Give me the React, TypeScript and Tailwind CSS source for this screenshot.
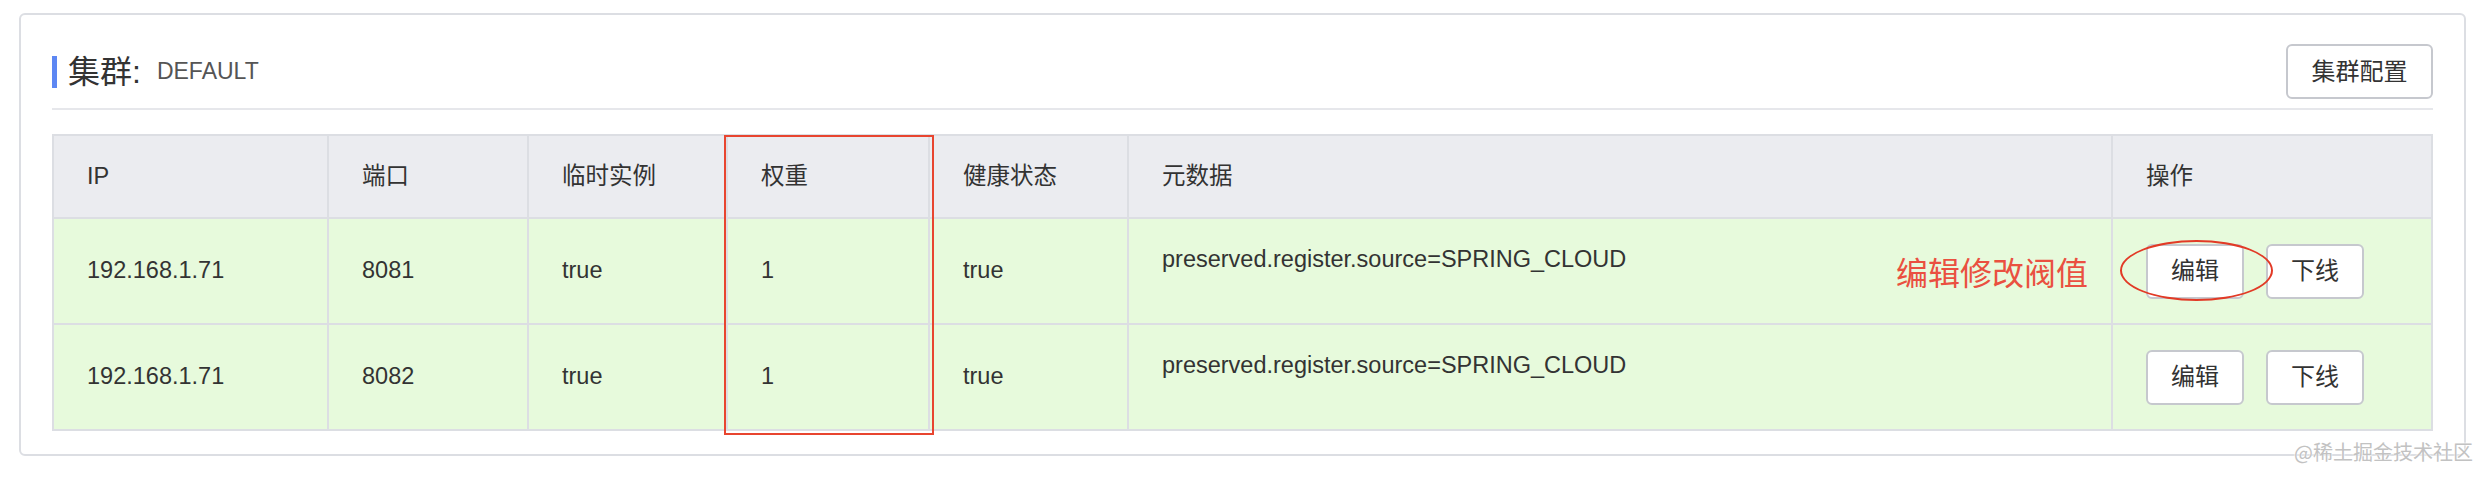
import React from 'react';

const cols = ['w-[275px]', 'w-[200px]', 'w-[199px]', 'w-[202px]', 'w-[199px]', 'w-[984px]', 'w-[320px]'];
const headers = ['IP', '端口', '临时实例', '权重', '健康状态', '元数据', '操作'];

const rows = [
  { ip: '192.168.1.71', port: '8081', ephemeral: 'true', weight: '1', healthy: 'true', meta: 'preserved.register.source=SPRING_CLOUD' },
  { ip: '192.168.1.71', port: '8082', ephemeral: 'true', weight: '1', healthy: 'true', meta: 'preserved.register.source=SPRING_CLOUD' },
];

function Btn({ children, className = '' }: { children: React.ReactNode; className?: string }) {
  return (
    <button className={`h-[55px] border-2 border-[#c6c8ce] rounded-[6px] bg-white text-[24px] text-[#333] flex items-center justify-center ${className}`}>
      {children}
    </button>
  );
}

export default function App() {
  return (
    <div className="relative w-[2476px] h-[480px] bg-white pt-[13px] pl-[19px] font-['Liberation_Sans','Noto_Sans_CJK_SC',sans-serif] text-[#333]">
      {/* card */}
      <div className="w-[2447px] h-[443px] border-2 border-[#dcdee3] rounded-[6px] px-[31px] pt-[29px]">
        {/* title */}
        <div className="flex items-center justify-between h-[55px]">
          <div className="flex items-center">
            <div className="w-[5px] h-[32px] bg-[#5d87f3]" />
            <span className="ml-[11px] text-[32px] leading-none text-[#333]">集群:</span>
            <span className="ml-[16px] text-[23px] leading-none text-[#555]">DEFAULT</span>
          </div>
          <Btn className="w-[147px]">集群配置</Btn>
        </div>
        <div className="mt-[9px] h-[2px] bg-[#e6e7eb]" />

        {/* table */}
        <div className="mt-[24px] border-l-2 border-t-2 border-[#dcdee3] w-[2381px] text-[23.5px]">
          <div className="flex bg-[#ebecf0]">
            {headers.map((h, i) => (
              <div key={h} className={`${cols[i]} h-[83px] border-r-2 border-b-2 border-[#dcdee3] flex items-center pl-[33px]`}>
                {h}
              </div>
            ))}
          </div>
          {rows.map((r) => (
            <div key={r.port} className="flex bg-[#e7fadc]">
              {[r.ip, r.port, r.ephemeral, r.weight, r.healthy].map((v, i) => (
                <div key={i} className={`${cols[i]} h-[106px] border-r-2 border-b-2 border-[#dcdee3] flex items-center pl-[33px]`}>
                  {v}
                </div>
              ))}
              <div className={`${cols[5]} h-[106px] border-r-2 border-b-2 border-[#dcdee3] pl-[33px] pt-[23px] leading-[35px]`}>
                {r.meta}
              </div>
              <div className={`${cols[6]} h-[106px] border-r-2 border-b-2 border-[#dcdee3] flex items-center gap-[22px] pl-[33px]`}>
                <Btn className="w-[98px]">编辑</Btn>
                <Btn className="w-[98px]">下线</Btn>
              </div>
            </div>
          ))}
        </div>
      </div>

      {/* annotations */}
      <div className="absolute left-[724px] top-[135px] w-[210px] h-[300px] border-2 border-[#e8452f]" />
      <div className="absolute left-[1896px] top-[240px] h-[61px] flex items-center text-[32px] leading-none text-[#ea5040] font-['Noto_Sans_CJK_SC',sans-serif]">
        编辑修改阀值
      </div>
      <div className="absolute left-[2120px] top-[240px] w-[153px] h-[61px] rounded-[50%] border-2 border-[#e23a26]" />

      {/* watermark */}
      <div className="absolute left-[2294px] top-[442px] whitespace-nowrap text-[20px] leading-none text-[#c2c2c2] font-['Noto_Sans_CJK_SC',sans-serif] [text-shadow:0_0_2px_#fff,0_0_2px_#fff]">
        @稀土掘金技术社区
      </div>
    </div>
  );
}
